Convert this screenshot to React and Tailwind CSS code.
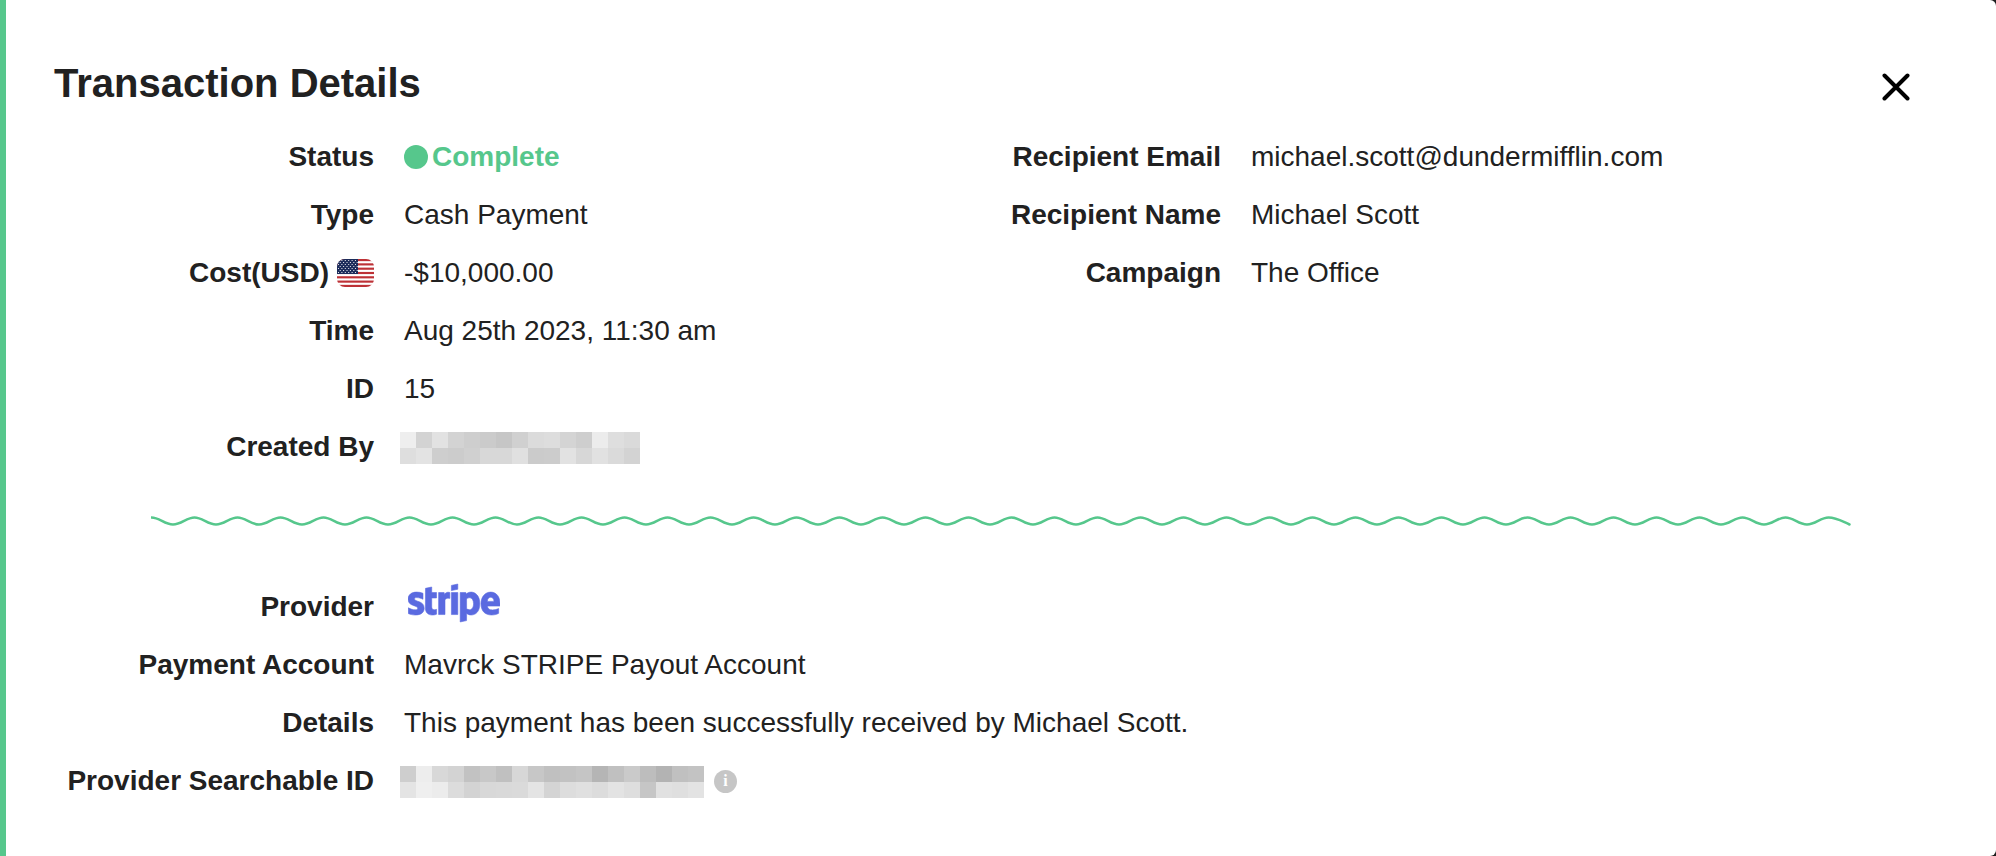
import { FaStripe } from "react-icons/fa";

const createdByTiles = [
    ["#eeeeee", "#d3d3d3", "#e2e2e2", "#d3d3d3", "#cecece", "#cbcbcb", "#c6c6c6", "#d0d0d0", "#dbdbdb", "#dddddd", "#d4d4d4", "#cecece", "#ececec", "#dedede", "#dadada"],
    ["#dedede", "#e3e3e3", "#cecece", "#cccccc", "#d0d0d0", "#d8d8d8", "#d8d8d8", "#e0e0e0", "#cbcbcb", "#cccccc", "#e2e2e2", "#d7d7d7", "#e1e1e1", "#dadada", "#d3d3d3"],
];

const searchableIdTiles = [
    ["#cecece", "#ededed", "#d8d8d8", "#d3d3d3", "#c2c2c2", "#c8c8c8", "#c0c0c0", "#d7d7d7", "#c7c7c7", "#c0c0c0", "#c2c2c2", "#c5c5c5", "#b5b5b5", "#c0c0c0", "#cacaca", "#bdbdbd", "#b3b3b3", "#c0c0c0", "#c3c3c3"],
    ["#e4e4e4", "#efefef", "#ececec", "#dcdcdc", "#d3d3d3", "#d8d8d8", "#d9d9d9", "#dadada", "#e4e4e4", "#d4d4d4", "#dddddd", "#e0e0e0", "#dcdcdc", "#e3e3e3", "#dedede", "#c6c6c6", "#e1e1e1", "#dfdfdf", "#e3e3e3"],
];

const Redacted = ({ tiles }) => {
    return (
        <div className="-ml-1 mt-0.5 flex flex-col">
            {tiles.map((row, y) => (
                <div key={y} className="flex">
                    {row.map((color, x) => (
                        <span key={x} className="size-4" style={{ backgroundColor: color }} />
                    ))}
                </div>
            ))}
        </div>
    );
};

const Flag = () => {
    const stripes = [0, 2, 4, 6, 8, 10, 12];
    const stars = [];
    for (let row = 0; row < 7; row++) {
        for (let col = 0; col < 6; col++) {
            stars.push([1.5 + col * 3.4 + (row % 2) * 1.7, 1.5 + row * 2]);
        }
    }
    return (
        <svg viewBox="0 0 37 28" className="h-7 w-[37px] rounded-lg" preserveAspectRatio="none">
            <rect width="37" height="28" fill="#fff" />
            {stripes.map((i) => (
                <rect key={i} y={(i * 28) / 13} width="37" height={28 / 13} fill="#bd3136" />
            ))}
            <rect width="21" height="15" fill="#1c2c5b" />
            {stars.map(([x, y], i) => (
                <circle key={i} cx={x} cy={y} r="0.6" fill="#fff" />
            ))}
        </svg>
    );
};

const Wave = () => {
    let d = "M0 1.5";
    for (let i = 0; i < 39; i++) {
        const x = i * 43;
        d += ` C${x + 8} 1.5 ${x + 13} 8.5 ${x + 21.5} 8.5 S${x + 35} 1.5 ${x + 43} 1.5`;
    }
    d += " C1685 1.5 1690 5 1698 8.5";
    return (
        <svg viewBox="0 0 1699 10" className="block w-full" fill="none" stroke="#56c78c" strokeWidth="2.5" strokeLinecap="round">
            <path d={d} />
        </svg>
    );
};

const Row = ({ label, children }) => {
    return (
        <div className="flex h-[58px] items-center gap-[30px] whitespace-nowrap">
            <dt className="flex w-80 shrink-0 items-center justify-end gap-2 font-bold">{label}</dt>
            <dd className="flex items-center">{children}</dd>
        </div>
    );
};

const App = () => {
    return (
        <div className="bg-[#1c1c1c]">
            <main className="min-h-screen rounded-r-[6px] border-l-[6px] border-[#56c78c] bg-white pt-[53px] pb-11 font-['Liberation_Sans',Arial,sans-serif] text-[28px] text-[#212121]">
                <header className="flex items-center justify-between pr-20 pl-12">
                    <h1 className="text-[40px] leading-[60px] font-bold">Transaction Details</h1>
                    <button type="button" aria-label="Close" className="mt-2 p-1.5">
                        <svg viewBox="0 0 28 28" className="size-7" stroke="#000" strokeWidth="4" strokeLinecap="round">
                            <path d="M2.5 2.5L25.5 25.5M25.5 2.5L2.5 25.5" />
                        </svg>
                    </button>
                </header>

                <div className="mt-[15px] grid grid-cols-2 items-start pr-[248px] pl-12">
                    <dl>
                        <Row label="Status">
                            <span className="flex items-center gap-1 font-bold text-[#56c78c]">
                                <span className="size-6 rounded-full bg-[#56c78c]" />
                                Complete
                            </span>
                        </Row>
                        <Row label="Type">Cash Payment</Row>
                        <Row
                            label={
                                <>
                                    Cost(USD) <Flag />
                                </>
                            }
                        >
                            -$10,000.00
                        </Row>
                        <Row label="Time">Aug 25th 2023, 11:30 am</Row>
                        <Row label="ID">15</Row>
                        <Row label="Created By">
                            <Redacted tiles={createdByTiles} />
                        </Row>
                    </dl>
                    <dl>
                        <Row label="Recipient Email">michael.scott@dundermifflin.com</Row>
                        <Row label="Recipient Name">Michael Scott</Row>
                        <Row label="Campaign">The Office</Row>
                    </dl>
                </div>

                <div className="mt-10 px-[145px]">
                    <Wave />
                </div>

                <dl className="mt-[52px] pl-12">
                    <Row label="Provider">
                        <FaStripe className="-mt-2 ml-1 h-20 w-[92px] text-[#5a6ae0]" strokeWidth="4" aria-label="Stripe" />
                    </Row>
                    <Row label="Payment Account">Mavrck STRIPE Payout Account</Row>
                    <Row label="Details">This payment has been successfully received by Michael Scott.</Row>
                    <Row label="Provider Searchable ID">
                        <Redacted tiles={searchableIdTiles} />
                        <span className="ml-2.5 flex size-[23px] items-center justify-center rounded-full bg-[#c6c6c6] font-['Liberation_Serif',serif] text-base leading-none font-bold text-white">
                            i
                        </span>
                    </Row>
                </dl>
            </main>
        </div>
    );
};
export default App;
